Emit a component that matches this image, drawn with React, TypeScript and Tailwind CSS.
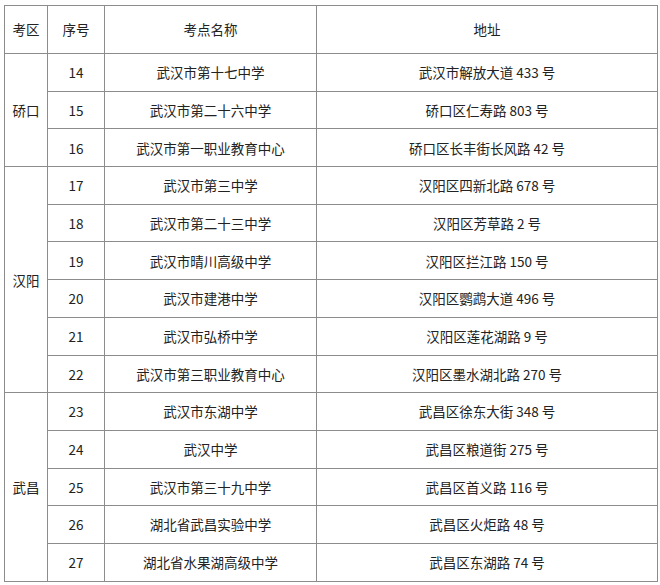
const groups = [
  {
    area: "硚口",
    rows: [
      ["14", "武汉市第十七中学", "武汉市解放大道 433 号"],
      ["15", "武汉市第二十六中学", "硚口区仁寿路 803 号"],
      ["16", "武汉市第一职业教育中心", "硚口区长丰街长风路 42 号"],
    ],
  },
  {
    area: "汉阳",
    rows: [
      ["17", "武汉市第三中学", "汉阳区四新北路 678 号"],
      ["18", "武汉市第二十三中学", "汉阳区芳草路 2 号"],
      ["19", "武汉市晴川高级中学", "汉阳区拦江路 150 号"],
      ["20", "武汉市建港中学", "汉阳区鹦鹉大道 496 号"],
      ["21", "武汉市弘桥中学", "汉阳区莲花湖路 9 号"],
      ["22", "武汉市第三职业教育中心", "汉阳区墨水湖北路 270 号"],
    ],
  },
  {
    area: "武昌",
    rows: [
      ["23", "武汉市东湖中学", "武昌区徐东大街 348 号"],
      ["24", "武汉中学", "武昌区粮道街 275 号"],
      ["25", "武汉市第三十九中学", "武昌区首义路 116 号"],
      ["26", "湖北省武昌实验中学", "武昌区火炬路 48 号"],
      ["27", "湖北省水果湖高级中学", "武昌区东湖路 74 号"],
    ],
  },
];

const cell = "border border-[#8c8c8c] text-center align-middle p-0";

export default function App() {
  return (
    <div
      className="w-[660px] h-[585px] bg-white pl-[4px] pt-[5px] text-[13.5px] text-[#222]"
      style={{ fontFamily: '"Noto Sans CJK SC", "Noto Sans", sans-serif' }}
    >
      <table className="table-fixed border-collapse w-[653px]">
        <colgroup>
          <col className="w-[43px]" />
          <col className="w-[57px]" />
          <col className="w-[212px]" />
          <col className="w-[341px]" />
        </colgroup>
        <thead>
          <tr className="h-[48px]">
            <th className={`${cell} font-normal`}>考区</th>
            <th className={`${cell} font-normal`}>序号</th>
            <th className={`${cell} font-normal`}>考点名称</th>
            <th className={`${cell} font-normal`}>地址</th>
          </tr>
        </thead>
        <tbody>
          {groups.map((g) =>
            g.rows.map((r, i) => (
              <tr key={r[0]} className="h-[37.7px]">
                {i === 0 && (
                  <td className={cell} rowSpan={g.rows.length}>
                    {g.area}
                  </td>
                )}
                <td className={cell}>{r[0]}</td>
                <td className={cell}>{r[1]}</td>
                <td className={cell}>{r[2]}</td>
              </tr>
            ))
          )}
        </tbody>
      </table>
    </div>
  );
}
